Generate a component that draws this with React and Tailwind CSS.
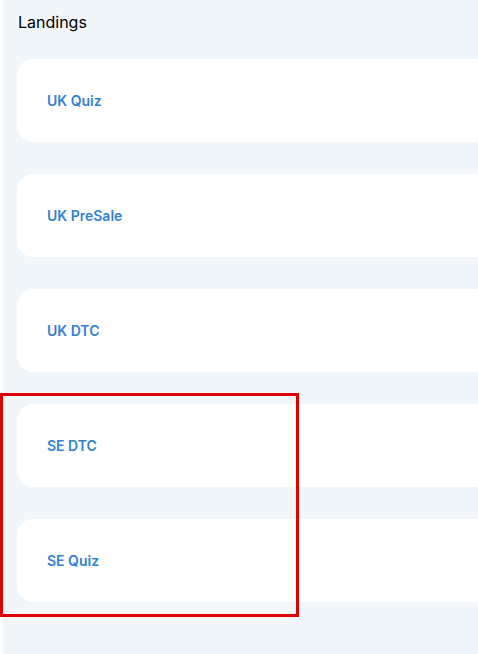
import React from "react";

const items = ["UK Quiz", "UK PreSale", "UK DTC", "SE DTC", "SE Quiz"];

export default function App() {
  return (
    <div className="w-[478px] h-[654px] bg-white overflow-hidden relative" style={{ fontFamily: "Inter, 'Noto Sans', sans-serif" }}>
      <div className="ml-[3px] w-[475px] h-[654px] bg-[#f1f6fa] pt-[11px] pl-[14px] overflow-hidden">
        <div className="ml-[1px] text-[16px] leading-[22px] text-black">Landings</div>
        <div className="mt-[26px] flex flex-col gap-[32px]">
          {items.map((t) => (
            <div key={t} className="h-[83px] w-[500px] bg-white rounded-[16px] flex items-center pl-[30px]">
              <span className="text-[14px] font-semibold text-[#3182ce]">{t}</span>
            </div>
          ))}
        </div>
      </div>
      <div className="absolute left-0 top-[393px] w-[299px] h-[224px] border-[3px] border-[#e00000]" />
    </div>
  );
}
